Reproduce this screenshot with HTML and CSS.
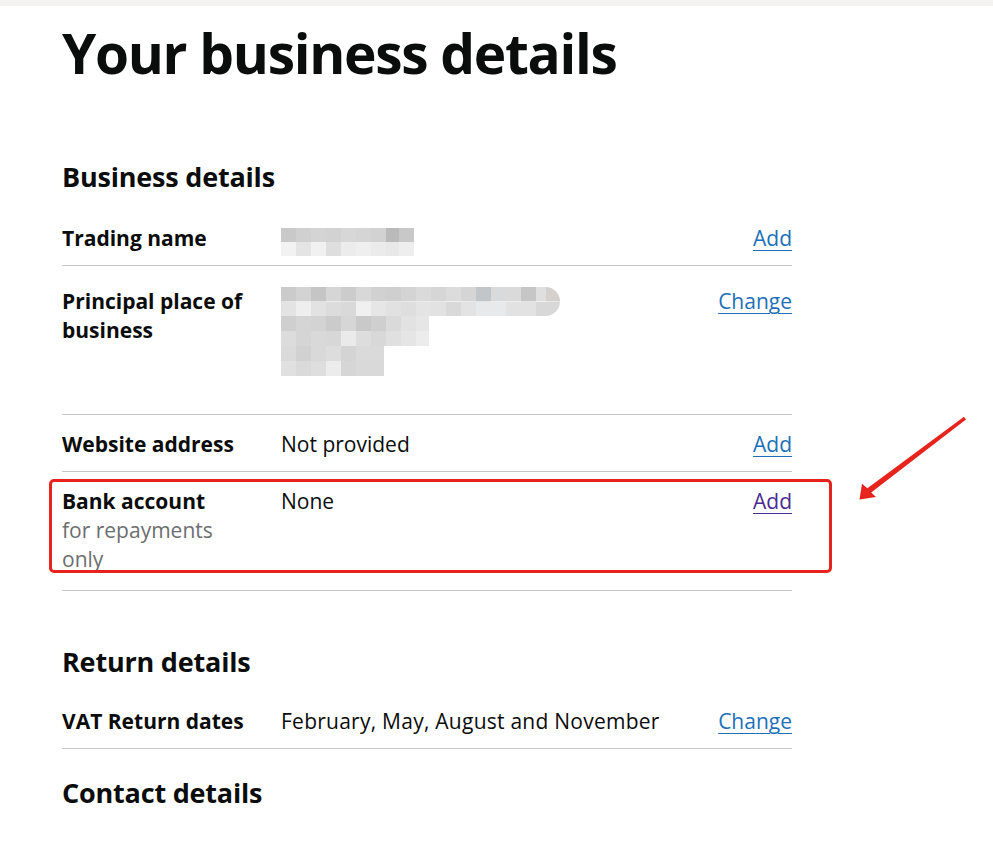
FILE: index.html
```html
<!DOCTYPE html>
<html lang="en">
<head>
<meta charset="utf-8">
<title>Your business details</title>
<link rel="stylesheet" href="styles.css">
</head>
<body>
<div class="topbar"></div>
<main class="page">
  <h1 class="title">Your business details</h1>

  <h2 class="section-title section-title--first">Business details</h2>
  <dl class="summary">
    <div class="row">
      <dt class="key">Trading name</dt>
      <dd class="value"><span class="blur blur-trading"></span></dd>
      <dd class="action"><a class="link" href="#">Add</a></dd>
    </div>
    <div class="row row--address">
      <dt class="key">Principal place of business</dt>
      <dd class="value value--address">
        <span class="blur blur-addr1"></span>
        <span class="blur blur-addr2"></span>
        <span class="blur blur-addr3"></span>
      </dd>
      <dd class="action"><a class="link" href="#">Change</a></dd>
    </div>
    <div class="row">
      <dt class="key">Website address</dt>
      <dd class="value">Not provided</dd>
      <dd class="action"><a class="link" href="#">Add</a></dd>
    </div>
    <div class="row row--bank">
      <dt class="key">Bank account <span class="hint">for repayments only</span></dt>
      <dd class="value">None</dd>
      <dd class="action"><a class="link link--visited" href="#">Add</a></dd>
      <div class="highlight"></div>
    </div>
  </dl>

  <h2 class="section-title section-title--return">Return details</h2>
  <dl class="summary">
    <div class="row">
      <dt class="key">VAT Return dates</dt>
      <dd class="value value--wide">February, May, August and November</dd>
      <dd class="action"><a class="link" href="#">Change</a></dd>
    </div>
  </dl>

  <h2 class="section-title section-title--contact">Contact details</h2>

  <svg class="arrow" width="125" height="100" viewBox="0 0 125 100" aria-hidden="true">
    <polygon points="116,12.5 21.2,85.6 26,90 9.5,92.5 12,76.8 17.4,81.2 114,9.8" fill="#e6241d"/>
  </svg>
</main>
</body>
</html>
```

FILE: styles.css
```css
html, body {
  margin: 0;
  padding: 0;
  background: #ffffff;
}

body {
  font-family: "Open Sans", "Liberation Sans", Arial, sans-serif;
  color: #0b0c0c;
  font-size: 21px;
  line-height: 29px;
}

.topbar {
  height: 6px;
  background: #f3f2f1;
}

.page {
  position: relative;
  padding: 0 0 0 62px;
  width: 730px;
}

.title {
  margin: 17px 0 0;
  font-size: 55px;
  line-height: 60px;
  font-weight: 700;
  letter-spacing: -1.3px;
}

.section-title {
  margin: 0 0 15px;
  font-size: 27px;
  line-height: 34px;
  font-weight: 700;
  letter-spacing: -0.2px;
}

.section-title--first {
  margin-top: 77px;
}

.section-title--return {
  margin-top: 54px;
  margin-bottom: 13px;
}

.section-title--contact {
  margin-top: 27px;
}

.summary {
  margin: 0;
  padding: 0;
}

.row {
  position: relative;
  display: grid;
  grid-template-columns: 219px 1fr auto;
  padding: 15px 0 12px;
  border-bottom: 1px solid #c5c7c9;
}

.row--address {
  padding-top: 21px;
}

.row--bank {
  padding-bottom: 16px;
}

.key {
  margin: 0;
  padding-right: 30px;
  font-weight: 700;
}

.hint {
  display: block;
  font-weight: 400;
  color: #6c6e70;
}

.value {
  margin: 0;
}

.value--wide {
  letter-spacing: 0.25px;
}

.value--address {
  display: flex;
  flex-direction: column;
  align-items: flex-start;
  height: 115px;
}

.action {
  margin: 0;
  text-align: right;
}

.link {
  color: #1d70b8;
  text-decoration: underline;
  text-decoration-thickness: 1px;
  text-underline-offset: 4px;
}

.link--visited {
  color: #4c2c92;
}

/* pixelated (redacted) values */
.blur {
  display: block;
  background-repeat: no-repeat;
}

.blur-trading {
  width: 133px;
  height: 28px;
  margin-top: 4px;
  margin-bottom: -3px;
  background-image:
    linear-gradient(90deg, #c9c9c9 0 15px, #d0d0d0 15px 30px, #d4d4d4 30px 45px, #d2d2d2 45px 60px, #d7d7d7 60px 75px, #d5d5d5 75px 90px, #d2d2d2 90px 105px, #bababa 105px 118px, #c8c8c8 118px),
    linear-gradient(90deg, #f2f2f2 0 15px, #e4e4e4 15px 30px, #f1f1f1 30px 45px, #dedede 45px 60px, #ececec 60px 75px, #efefef 75px 90px, #ebebeb 90px 105px, #e8e8e8 105px 118px, #eeeeee 118px);
  background-size: 100% 50%, 100% 50%;
  background-position: top left, bottom left;
}

.blur-addr1 {
  width: 279px;
  height: 29px;
  border-radius: 0 15px 15px 0;
  background-image:
    linear-gradient(90deg, #cbcbcb 0 15px, #d3d3d3 15px 30px, #c5c5c5 30px 45px, #d6d6d6 45px 60px, #cccccc 60px 75px, #d8d8d8 75px 90px, #d1d1d1 90px 105px, #cfcfcf 105px 120px, #d4d4d4 120px 135px, #dadada 135px 150px, #d6d6d6 150px 165px, #dcdcdc 165px 180px, #d5d5d5 180px 195px, #c2c6c8 195px 210px, #d8dadb 210px 225px, #dadada 225px 240px, #c6c6c6 240px 255px, #dfdfdf 255px 265px, #d3d0ce 265px),
    linear-gradient(90deg, #e3e3e3 0 15px, #eeeeee 15px 30px, #e2e2e2 30px 45px, #dcdcdc 45px 60px, #d9d9d9 60px 75px, #f0f0f0 75px 90px, #e6e6e6 90px 105px, #e1e1e1 105px 120px, #dedede 120px 135px, #e4e4e4 135px 150px, #e2e2e2 150px 165px, #d9d9d9 165px 180px, #e3e3e3 180px 195px, #e7e9ea 195px 225px, #e2e2e2 225px 255px, #d8d8d8 255px);
  background-size: 100% 50%, 100% 50%;
  background-position: top left, bottom left;
}

.blur-addr2 {
  width: 148px;
  height: 30px;
  background-image:
    linear-gradient(90deg, #cfcfcf 0 15px, #d5d5d5 15px 30px, #d3d3d3 30px 45px, #cbcbcb 45px 60px, #d6d6d6 60px 75px, #c9c9c9 75px 90px, #cfcfcf 90px 105px, #dadada 105px 120px, #e2e2e2 120px 135px, #e6e6e6 135px),
    linear-gradient(90deg, #dcdcdc 0 15px, #d5d5d5 15px 30px, #d9d9d9 30px 45px, #d7d7d7 45px 60px, #eaeaea 60px 75px, #dddddd 75px 90px, #d8d8d8 90px 105px, #e0e0e0 105px 120px, #e5e5e5 120px 135px, #ececec 135px);
  background-size: 100% 50%, 100% 50%;
  background-position: top left, bottom left;
}

.blur-addr3 {
  width: 103px;
  height: 30px;
  background-image:
    linear-gradient(90deg, #dadada 0 15px, #d1d1d1 15px 30px, #d9d9d9 30px 45px, #dddddd 45px 60px, #d4d4d4 60px 75px, #dadada 75px),
    linear-gradient(90deg, #e0e0e0 0 15px, #dadada 15px 30px, #dedede 30px 45px, #ececec 45px 60px, #d6d6d6 60px 75px, #d9d9d9 75px);
  background-size: 100% 50%, 100% 50%;
  background-position: top left, bottom left;
}

/* annotation overlays */
.highlight {
  position: absolute;
  left: -13px;
  top: 7px;
  width: 777px;
  height: 88px;
  border: 3px solid #e6241d;
  border-radius: 5px;
  pointer-events: none;
}

.arrow {
  position: absolute;
  left: 850px;
  top: 384px;
  pointer-events: none;
}
```
